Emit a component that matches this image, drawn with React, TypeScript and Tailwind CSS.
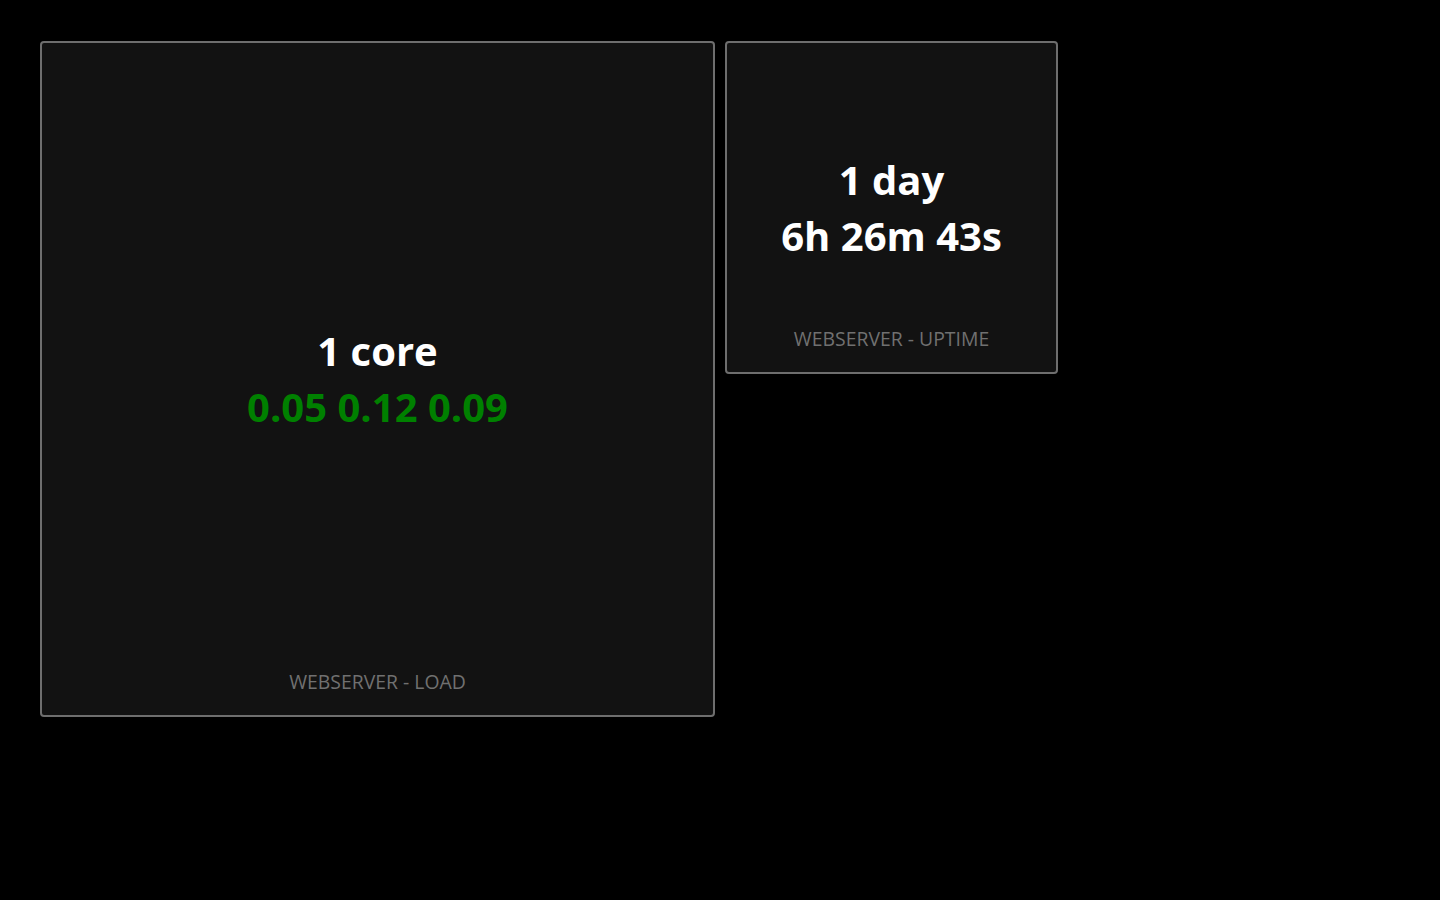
import React from "react";

function Card({ className, lines, label }: { className: string; lines: { text: string; color: string }[]; label: string }) {
  return (
    <div className={`relative flex flex-col items-center justify-center rounded-[4px] border-2 border-[#6e6e6e] bg-[#121212] ${className}`}>
      <div className="flex flex-col items-center">
        {lines.map((l, i) => (
          <div key={i} className={`text-[40px] font-bold leading-[56px] ${l.color}`}>
            {l.text}
          </div>
        ))}
      </div>
      <div className="absolute bottom-[21px] left-0 right-0 text-center text-[19.4px] leading-[24px] text-[#707070]">
        {label}
      </div>
    </div>
  );
}

export default function App() {
  return (
    <div
      className="min-h-[900px] w-full bg-black pl-[40px] pt-[41px]"
      style={{ fontFamily: '"Open Sans", "Noto Sans", sans-serif' }}
    >
      <div className="flex items-start gap-[10px]">
        <Card
          className="h-[676px] w-[675px]"
          lines={[
            { text: "1 core", color: "text-white" },
            { text: "0.05 0.12 0.09", color: "text-[#008000]" },
          ]}
          label="WEBSERVER - LOAD"
        />
        <Card
          className="h-[333px] w-[333px]"
          lines={[
            { text: "1 day", color: "text-white" },
            { text: "6h 26m 43s", color: "text-white" },
          ]}
          label="WEBSERVER - UPTIME"
        />
      </div>
    </div>
  );
}
